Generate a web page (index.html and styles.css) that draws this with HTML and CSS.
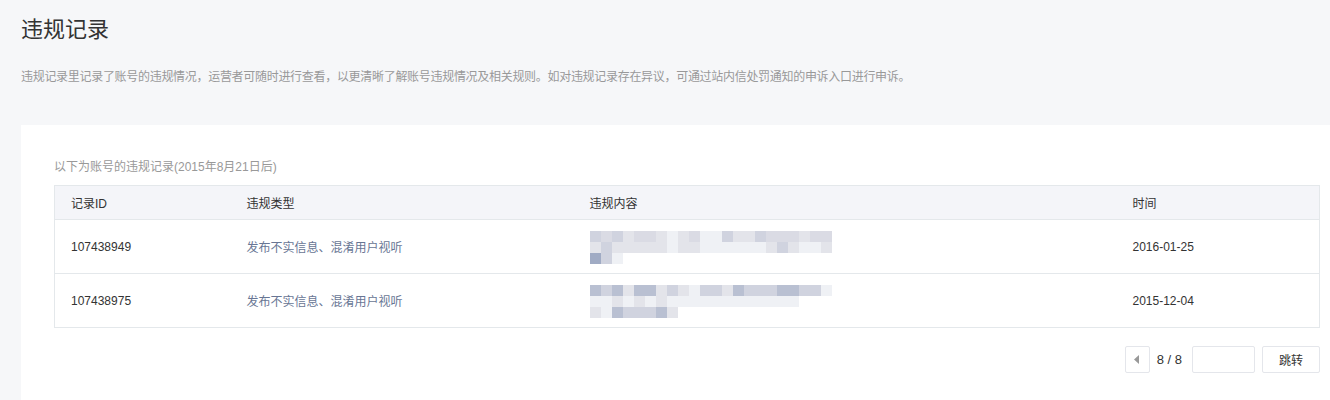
FILE: index.html
```html
<!DOCTYPE html>
<html lang="zh-CN">
<head>
    <meta charset="UTF-8">
    <title>违规记录</title>
    <link rel="stylesheet" href="styles.css">
</head>
<body>
    <div class="page">
        <h1 class="title">违规记录</h1>
        <p class="desc">违规记录里记录了账号的违规情况，运营者可随时进行查看，以更清晰了解账号违规情况及相关规则。如对违规记录存在异议，可通过站内信处罚通知的申诉入口进行申诉。</p>

        <div class="card">
            <div class="caption">以下为账号的违规记录(2015年8月21日后)</div>
            <table class="records">
                <colgroup>
                    <col class="col-id">
                    <col class="col-type">
                    <col class="col-content">
                    <col>
                </colgroup>
                <thead>
                    <tr>
                        <th>记录ID</th>
                        <th>违规类型</th>
                        <th>违规内容</th>
                        <th>时间</th>
                    </tr>
                </thead>
                <tbody>
                    <tr>
                        <td>107438949</td>
                        <td class="type">发布不实信息、混淆用户视听</td>
                        <td>
                            <!-- pixelated (hidden) content -->
                            <div class="mosaic">
                                <div class="line"><i class="c2"></i><i class="c1"></i><i class="c2"></i><i class="c3"></i><i class="c1"></i><i class="c1"></i><i class="c3"></i><i class="c4"></i><i class="c3"></i><i class="c1"></i><i class="c4"></i><i class="c4"></i><i class="c2"></i><i class="c3"></i><i class="c3"></i><i class="c2"></i><i class="c1"></i><i class="c1"></i><i class="c1"></i><i class="c3"></i><i class="c1"></i><i class="c1"></i></div>
                                <div class="line"><i class="c3"></i><i class="c2"></i><i class="c3"></i><i class="c3"></i><i class="c3"></i><i class="c3"></i><i class="c3"></i><i class="c4"></i><i class="c3"></i><i class="c3"></i><i class="c4"></i><i class="c4"></i><i class="c4"></i><i class="c4"></i><i class="c4"></i><i class="c4"></i><i class="c3"></i><i class="c2"></i><i class="c3"></i><i class="c4"></i><i class="c4"></i><i class="c3"></i></div>
                                <div class="line"><i class="c6"></i><i class="c2"></i><i class="c4"></i></div>
                            </div>
                        </td>
                        <td>2016-01-25</td>
                    </tr>
                    <tr>
                        <td>107438975</td>
                        <td class="type">发布不实信息、混淆用户视听</td>
                        <td>
                            <div class="mosaic">
                                <div class="line"><i class="c5"></i><i class="c2"></i><i class="c5"></i><i class="c3"></i><i class="c5"></i><i class="c5"></i><i class="c3"></i><i class="c2"></i><i class="c3"></i><i class="c4"></i><i class="c2"></i><i class="c2"></i><i class="c3"></i><i class="c5"></i><i class="c2"></i><i class="c2"></i><i class="c2"></i><i class="c5"></i><i class="c5"></i><i class="c2"></i><i class="c2"></i><i class="c4"></i></div>
                                <div class="line"><i class="c4"></i><i class="c4"></i><i class="c3"></i><i class="c4"></i><i class="c3"></i><i class="c4"></i><i class="c3"></i><i class="c4"></i><i class="c4"></i><i class="c4"></i><i class="c4"></i><i class="c4"></i><i class="c4"></i><i class="c4"></i><i class="c4"></i><i class="c4"></i><i class="c4"></i><i class="c4"></i><i class="c4"></i></div>
                                <div class="line"><i class="c3"></i><i class="c4"></i><i class="c5"></i><i class="c2"></i><i class="c2"></i><i class="c2"></i><i class="c5"></i><i class="c3"></i></div>
                            </div>
                        </td>
                        <td>2015-12-04</td>
                    </tr>
                </tbody>
            </table>

            <div class="pager">
                <button class="prev" type="button" aria-label="上一页">
                    <svg width="6" height="9" viewBox="0 0 6 9"><path d="M5 0 L0 4.5 L5 9 Z" fill="#999"/></svg>
                </button>
                <span class="count">8 / 8</span>
                <input class="jump-input" type="text">
                <button class="jump" type="button">跳转</button>
            </div>
        </div>
    </div>
</body>
</html>
```

FILE: styles.css
```css
body {
    margin: 0;
    background: #f6f7f9;
    font-family: "Liberation Sans", "Noto Sans CJK SC", sans-serif;
    color: #333;
}
.page {
    padding: 16px 0 0 21px;
}
.title {
    margin: 0;
    font-size: 22px;
    font-weight: normal;
    line-height: 28px;
    color: #333;
}
.desc {
    margin: 24px 0 0;
    font-size: 12px;
    line-height: 18px;
    letter-spacing: -0.3px;
    color: #999;
}
.card {
    margin-top: 39px;
    background: #fff;
    padding: 33px 10px 30px 33px;
    min-height: 240px;
}
.caption {
    font-size: 12px;
    line-height: 18px;
    color: #999;
    margin-bottom: 9px;
}
.records {
    width: 100%;
    border-collapse: collapse;
    border: 1px solid #e4e8eb;
    font-size: 12px;
    table-layout: fixed;
}
.col-id {
    width: 176px;
}
.col-type {
    width: 343px;
}
.col-content {
    width: 543px;
}
.records th {
    background: #f4f5f9;
    font-weight: normal;
    text-align: left;
    height: 33px;
    padding: 0 0 0 16px;
    color: #333;
    border-bottom: 1px solid #e4e8eb;
}
.records td {
    height: 53px;
    padding: 0 0 0 16px;
    border-bottom: 1px solid #e4e8eb;
    color: #333;
}
.records td.type {
    color: #687694;
}
.mosaic {
    padding-top: 1px;
}
.mosaic .line {
    display: flex;
    height: 11px;
}
.mosaic i {
    display: block;
    width: 11px;
    height: 11px;
}
.c1 { background: #dadbe4; }
.c2 { background: #d0d3df; }
.c3 { background: #e3e4ea; }
.c4 { background: #eff1f5; }
.c5 { background: #b9c0d2; }
.c6 { background: #a0abc4; }
.pager {
    display: flex;
    justify-content: flex-end;
    align-items: center;
    margin-top: 18px;
    font-size: 12px;
}
.pager button,
.pager input {
    box-sizing: border-box;
    height: 27px;
    border: 1px solid #e4e6eb;
    border-radius: 2px;
    background: #fff;
    font-family: inherit;
}
.prev {
    width: 25px;
    padding: 0;
    display: flex;
    align-items: center;
    justify-content: center;
}
.count {
    margin: 0 10px 0 7px;
    font-size: 13px;
    color: #333;
}
.jump-input {
    width: 63px;
    margin-right: 7px;
}
.jump {
    width: 58px;
    font-size: 12px;
    color: #333;
    cursor: pointer;
}
```
